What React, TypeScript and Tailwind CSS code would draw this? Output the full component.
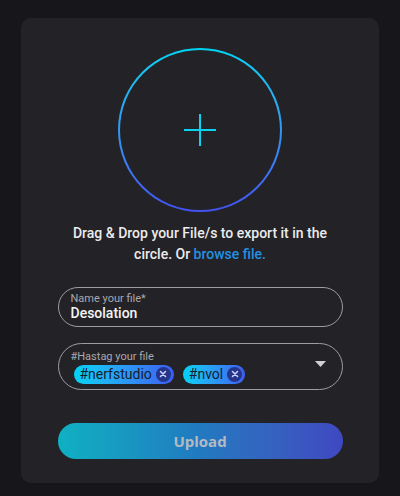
import { useState } from "react";

function Chip({ label }: { label: string }) {
    return (
        <span className="inline-flex h-[19px] items-center gap-[4px] rounded-full bg-gradient-to-r from-[#00d2f5] to-[#3c5cf0] pl-[6px] pr-[3px] text-[14px] leading-none text-[#16202e]">
            {label}
            <span className="flex h-[15px] w-[15px] items-center justify-center rounded-full bg-[#26348a]">
                <svg width="8" height="8" viewBox="0 0 8 8" fill="none">
                    <path d="M1.5 1.5l5 5M6.5 1.5l-5 5" stroke="#c7d2ff" strokeWidth="1.6" strokeLinecap="round" />
                </svg>
            </span>
        </span>
    );
}

export default function App() {
    const [name] = useState("Desolation");

    return (
        <div className="min-h-[496px] w-[400px] bg-[#17171b] pt-[18px] font-['Roboto',sans-serif]">
            <div className="mx-auto flex h-[465px] w-[358px] flex-col items-center rounded-[10px] bg-[#232227]">
                <div className="mt-[30px] flex h-[164px] w-[164px] items-center justify-center rounded-full bg-gradient-to-b from-[#00d4f2] to-[#4350ef] p-[2px]">
                    <div className="flex h-full w-full items-center justify-center rounded-full bg-[#232227]">
                        <svg width="34" height="34" viewBox="0 0 34 34">
                            <path d="M17 1v32M1 17h32" stroke="#0ad2f2" strokeWidth="2" />
                        </svg>
                    </div>
                </div>

                <p className="mt-[11px] w-[290px] text-center text-[14px] font-medium leading-[21px] text-[#ececec]">
                    Drag &amp; Drop your File/s to export it in the circle. Or{" "}
                    <span className="text-[#2390e2]">browse file.</span>
                </p>

                <div className="mt-[22px] flex h-[40px] w-[285px] flex-col justify-center rounded-full border border-[#9c9ca2] pl-[12px]">
                    <span className="text-[11px] leading-[13px] text-[#a8a8ae]">Name your file*</span>
                    <span className="text-[14px] font-medium leading-[17px] text-[#f4f4f4]">{name}</span>
                </div>

                <div className="relative mt-[16px] flex h-[47px] w-[285px] flex-col justify-center rounded-full border border-[#9c9ca2] pl-[12px]">
                    <span className="text-[11px] leading-[13px] text-[#a8a8ae]">#Hastag your file</span>
                    <div className="mt-[2px] flex gap-[9px] pl-[3px]">
                        <Chip label="#nerfstudio" />
                        <Chip label="#nvol" />
                    </div>
                    <svg className="absolute right-[16px] top-[17px]" width="11" height="6" viewBox="0 0 11 6">
                        <path d="M0 0h11L5.5 6z" fill="#cfcfd4" />
                    </svg>
                </div>

                <button className="mt-[33px] h-[36px] w-[285px] rounded-full bg-gradient-to-r from-[#0fb1c2] via-[#2179c0] to-[#3f48c0] font-['Open_Sans',sans-serif] text-[15px] font-bold text-[#b3bac4]">
                    Upload
                </button>
            </div>
        </div>
    );
}
